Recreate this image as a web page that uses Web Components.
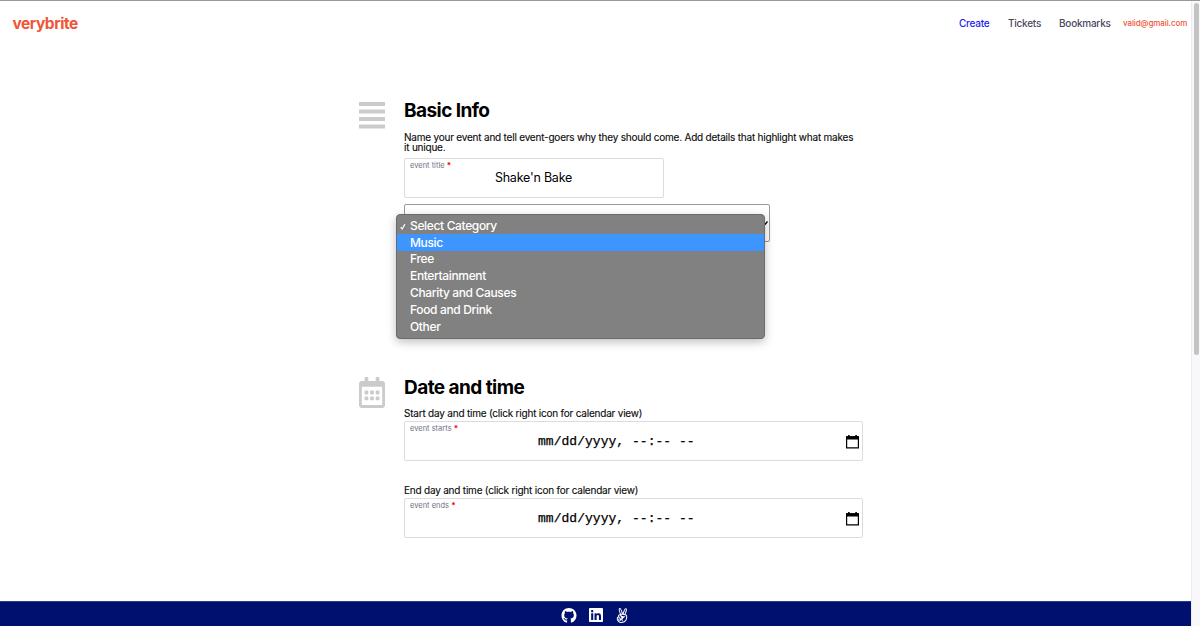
<!DOCTYPE html>
<html lang="en">
<head>
<meta charset="utf-8">
<title>verybrite</title>
<style>
html,body{margin:0;height:100%;overflow:hidden;background:#fff;font-family:Inter,"Liberation Sans",sans-serif}
</style>
</head>
<body>
<vb-app></vb-app>
<script>
const define = (name, html) => {
  const t = document.createElement('template');
  t.innerHTML = html;
  customElements.define(name, class extends HTMLElement {
    constructor() {
      super();
      this.attachShadow({ mode: 'open' }).append(t.content.cloneNode(true));
    }
  });
};

define('vb-header', `<style>
:host{display:flex;justify-content:space-between;height:45px;padding:0 4px 0 12.500px;align-items:center;box-sizing:border-box}
.logo{color:#f05537;font-weight:700;font-size:15.5px;letter-spacing:-.45px;line-height:20px;padding-top:1px}
nav{display:flex;align-items:center;font-size:10px;line-height:14px;font-weight:500;color:#4b4860;white-space:nowrap;letter-spacing:-.24px;padding-bottom:1px}
.create{color:#1c1cf0;width:49px}.tickets{width:51px}.book{width:64px}
.mail{color:#f05537;font-size:8px;width:64px;letter-spacing:-.09px}
</style><div class="logo">verybrite</div>
<nav><span class="create">Create</span><span class="tickets">Tickets</span><span class="book">Bookmarks</span><span class="mail">valid@gmail.com</span></nav>`);

define('vb-section', `<style>
:host{display:flex;gap:19px;box-sizing:border-box}
.icon{width:26px;flex:none;padding-top:3px}
.body{width:459px}
h2{margin:0;font-size:19px;line-height:24px;font-weight:700;letter-spacing:-.56px;color:#000;white-space:nowrap}
</style><div class="icon"><slot name="icon"></slot></div>
<div class="body"><h2><slot name="title"></slot></h2><slot></slot></div>`);

define('vb-note', `<style>
:host{display:block;font-size:10px;line-height:10px;color:#0a0a0a;white-space:nowrap;letter-spacing:-.21px;-webkit-text-stroke:.12px #0a0a0a}
</style><slot></slot>`);

define('vb-field', `<style>
:host{display:block;box-sizing:border-box;height:40px;border:1px solid #dcdce0;border-radius:2px;padding:2px 6px 2px 5px;background:#fff}
label{display:block;font-size:7.5px;line-height:9px;color:#6f7287;white-space:nowrap}
b{color:#f00;font-size:8px}
.value{display:flex;justify-content:center;align-items:center;height:15px;font-size:12.5px;letter-spacing:-.22px;color:#000;white-space:nowrap}
</style><label><slot name="label"></slot> <b>*</b></label><div class="value"><slot></slot></div>`);

define('vb-datetime', `<style>
:host{display:grid;grid-template-columns:1fr 14px;align-items:center;width:100%;font:13px/16px "Liberation Mono",monospace;letter-spacing:.03px;white-space:pre;-webkit-text-stroke:.25px #000;padding-top:3px}
span{padding-left:128px}
svg{display:block;width:13px;height:14px;margin:-1px 0 0 4px}
</style><span>mm/dd/yyyy, --:-- --</span>
<svg viewBox="0 0 13 14"><path d="M.6 1.9h11.8v11H.6z" fill="none" stroke="#000" stroke-width="1.2"/><path d="M0 1.3h13v3.2H0zM2.1 0h1.6v2H2.1zM9.3 0h1.6v2H9.3z"/></svg>`);

define('vb-menu-item', `<style>
:host{display:flex;align-items:center;height:16.85px;padding-left:4px;color:#fff;font-size:12px;letter-spacing:-.35px;font-weight:500;white-space:nowrap;box-sizing:border-box;padding-bottom:1.500px}
:host([active]){background:#3d95ff}
i{width:9px;flex:none}
svg{display:none;width:6px;height:7px;margin:2px 0 0 -1px}
:host([checked]) svg{display:block}
</style><i><svg viewBox="0 0 7 8"><path d="M.8 4.800 2.500 7 5.800 1.200" fill="none" stroke="#fff" stroke-width="1.3"/></svg></i><slot></slot>`);

define('vb-select', `<style>
:host{display:block;position:relative;box-sizing:border-box;width:366px;height:38px;border:1px solid #999;border-radius:2px;background:#fff}
.arrow{position:absolute;right:1px;top:16px;width:7px;height:5px}
.menu{position:absolute;left:-9px;top:9px;width:369px;height:125px;box-sizing:border-box;padding:2.500px 0;border:1px solid #6b6b6b;border-radius:4px;background:#818181;box-shadow:0 3px 10px rgba(0,0,0,.26)}
</style><svg class="arrow" viewBox="0 0 7 5"><path d="M.5.5 3.500 4 6.500.5" fill="none" stroke="#000" stroke-width="1.3"/></svg>
<div class="menu"><slot></slot></div>`);

define('vb-footer', `<style>
:host{display:flex;justify-content:center;align-items:center;height:25px;background:#00106e;padding-top:2px;box-sizing:border-box;border-top:1px solid #30398a}
svg{display:block;height:15px;fill:#fff}
.gh{width:16px;margin-right:12px;margin-left:-1px}.li{width:14px;height:16px;margin-right:12px}.al{width:14px;margin-right:1px}
</style>
<svg class="gh" viewBox="0 0 496 496"><path d="M165.9 389.400c0 2-2.300 3.600-5.200 3.600-3.300.3-5.600-1.300-5.600-3.600 0-2 2.300-3.600 5.200-3.600 3-.3 5.600 1.300 5.600 3.600zM244.800 0C106.100 0 0 105.300 0 244c0 110.900 69.800 205.800 169.500 239.200 12.800 2.300 17.300-5.600 17.300-12.100 0-6.200-.3-40.400-.3-61.400 0 0-70 15-84.700-29.800 0 0-11.400-29.100-27.800-36.600 0 0-22.900-15.700 1.600-15.400 0 0 24.900 2 38.600 25.800 21.900 38.600 58.600 27.500 72.900 20.900 2.300-16 8.800-27.100 16-33.700-55.900-6.200-112.300-14.300-112.300-110.500 0-27.500 7.600-41.300 23.600-58.900-2.600-6.500-11.100-33.300 2.600-67.900 20.900-6.500 69 27 69 27 20-5.600 41.500-8.500 62.800-8.500s42.800 2.900 62.800 8.500c0 0 48.100-33.600 69-27 13.700 34.700 5.200 61.400 2.600 67.900 16 17.700 25.800 31.500 25.800 58.900 0 96.500-58.900 104.200-114.800 110.500 9.200 7.900 17 22.900 17 46.400 0 33.700-.3 75.400-.3 83.600 0 6.500 4.600 14.400 17.300 12.100C428.200 449.800 496 354.900 496 244 496 105.300 383.500 0 244.800 0z"/></svg>
<svg class="li" viewBox="0 32 448 448"><path d="M416 32H31.900C14.300 32 0 46.500 0 64.300v383.400C0 465.500 14.300 480 31.900 480H416c17.600 0 32-14.500 32-32.300V64.300c0-17.800-14.400-32.300-32-32.300zM135.400 416H69V202.200h66.500V416zm-33.200-243c-21.300 0-38.500-17.300-38.500-38.500S80.900 96 102.200 96c21.200 0 38.500 17.300 38.500 38.500 0 21.300-17.200 38.500-38.500 38.500zm282.100 243h-66.400V312c0-24.800-.5-56.700-34.500-56.700-34.600 0-39.900 27-39.900 54.900V416h-66.400V202.200h63.700v29.200h.9c8.900-16.800 30.600-34.500 62.900-34.500 67.200 0 79.700 44.300 79.700 101.900V416z"/></svg>
<svg class="al" viewBox="0 0 448 512"><path d="M347.100 215.400c11.700-32.600 45.400-126.900 45.400-157.100 0-26.600-15.700-48.900-43.700-48.900-44.600 0-84.600 131.700-97.100 163.100C242 144 196.600 0 156.600 0c-31.100 0-45.700 22.900-45.700 51.700 0 35.300 34.200 126.800 46.600 162-6.300-2.300-13.100-4.300-20-4.300-23.400 0-48.300 29.100-48.300 52.600 0 8.900 4.900 21.400 8 29.700-36.900 10-51.100 34.600-51.100 71.700C46 435.600 114.400 512 210.600 512c118 0 191.400-88.600 191.400-202.900 0-43.100-6.900-82-54.900-93.700zM311.700 108c4-12.300 21.100-64.300 37.100-64.300 8.600 0 10.900 8.900 10.900 16 0 19.100-38.600 124.600-47.100 148l-34-6 33.100-93.700zM142.300 48.300c0-11.900 14.500-45.700 46.300 47.100l34.600 100.300c-15.600-1.300-27.700-3-35.400 1.400-10.900-28.800-45.500-119.700-45.500-148.800zM140 244c29.300 0 67.100 94.600 67.100 107.400 0 5.100-4.900 11.400-10.600 11.400-20.900 0-76.900-76.900-76.900-97.700.1-7.700 12.700-21.100 20.400-21.100zm184.300 186.300c-29.100 32-66.300 48.600-109.700 48.600-59.400 0-106.300-32.600-128.900-88.300-17.100-43.400 3.800-68.300 20.600-68.300 11.400 0 54.300 60.300 54.300 73.100 0 4.900-7.700 8.300-11.700 8.300-16.100 0-22.400-15.500-51.100-51.400-29.700 29.700 20.500 86.900 58.300 86.900 26.100 0 43.100-24.200 38-42 3.700 0 8.300.3 11.700-.6 1.100 27.100 9.100 59.400 41.700 61.700 0-.9 2-7.100 2-7.400 0-17.400-10.600-32.600-10.600-50.300 0-28.300 21.700-55.700 43.700-71.700 8-6 17.700-9.700 27.100-13.100 9.700-3.700 20-8 27.400-15.400-1.100-11.200-5.700-21.100-16.900-21.100-27.700 0-120.600 4-120.600-39.700 0-6.700.1-13.100 17.400-13.100 32.300 0 114.300 8 138.300 29.100 18.100 16.100 24.300 113.200-31 174.700z"/></svg>`);

define('vb-scrollbar', `<style>
:host{display:block;width:9px;background:#f8f8fa;border-left:1px solid #ececee;box-sizing:border-box}
div{width:5px;height:352px;margin:2px auto 0 2px;border-radius:3px;background:#c3c3c3}
</style><div></div>`);

define('vb-app', `<style>
:host{display:grid;grid-template-columns:1191px 9px;height:626px;box-sizing:border-box;border-top:1px solid #999}
.page{display:flex;flex-direction:column;height:625px}
main{flex:1;padding:53px 0 0 359px}
.first{height:277px}
.icon{display:block;fill:#cbcbcb}
.cal{margin-top:-2px}
.t1{width:260px;margin-top:6px}
vb-select{margin-top:6px}
.n1{margin-top:9px}.n2{margin-top:8px}.n3{margin-top:24px}
.d{margin-top:3px}
</style>
<div class="page"><vb-header></vb-header>
<main>
<vb-section class="first">
<svg slot="icon" class="icon" width="26" height="28" viewBox="0 0 26 28"><path d="M0 0h26v4H0zM0 7.500h26v4H0zM0 15h26v4H0zM0 22.500h26v4H0z"/></svg>
<span slot="title">Basic Info</span>
<vb-note class="n1">Name your event and tell event-goers why they should come. Add details that highlight what makes<br>it unique.</vb-note>
<vb-field class="t1"><span slot="label">event title</span>Shake'n Bake</vb-field>
<vb-select>
<vb-menu-item checked>Select Category</vb-menu-item>
<vb-menu-item active>Music</vb-menu-item>
<vb-menu-item>Free</vb-menu-item>
<vb-menu-item>Entertainment</vb-menu-item>
<vb-menu-item>Charity and Causes</vb-menu-item>
<vb-menu-item>Food and Drink</vb-menu-item>
<vb-menu-item>Other</vb-menu-item>
</vb-select>
</vb-section>
<vb-section>
<svg slot="icon" class="icon cal" width="26" height="31" viewBox="0 0 448 512" preserveAspectRatio="none"><path d="M148 288h-40c-6.600 0-12-5.400-12-12v-40c0-6.600 5.400-12 12-12h40c6.600 0 12 5.400 12 12v40c0 6.600-5.400 12-12 12zm108-12v-40c0-6.600-5.400-12-12-12h-40c-6.600 0-12 5.400-12 12v40c0 6.600 5.400 12 12 12h40c6.600 0 12-5.400 12-12zm96 0v-40c0-6.600-5.400-12-12-12h-40c-6.600 0-12 5.400-12 12v40c0 6.600 5.400 12 12 12h40c6.600 0 12-5.400 12-12zm-96 96v-40c0-6.600-5.400-12-12-12h-40c-6.600 0-12 5.400-12 12v40c0 6.600 5.400 12 12 12h40c6.600 0 12-5.400 12-12zm-96 0v-40c0-6.600-5.400-12-12-12h-40c-6.600 0-12 5.400-12 12v40c0 6.600 5.400 12 12 12h40c6.600 0 12-5.400 12-12zm192 0v-40c0-6.600-5.400-12-12-12h-40c-6.600 0-12 5.400-12 12v40c0 6.600 5.400 12 12 12h40c6.600 0 12-5.400 12-12zm96-260v352c0 26.500-21.500 48-48 48H48c-26.500 0-48-21.500-48-48V112c0-26.500 21.500-48 48-48h48V12c0-6.600 5.400-12 12-12h40c6.600 0 12 5.400 12 12v52h128V12c0-6.600 5.400-12 12-12h40c6.600 0 12 5.400 12 12v52h48c26.500 0 48 21.500 48 48zm-48 346V160H48v298c0 3.300 2.700 6 6 6h340c3.300 0 6-2.700 6-6z"/></svg>
<span slot="title">Date and time</span>
<vb-note class="n2">Start day and time (click right icon for calendar view)</vb-note>
<vb-field class="d"><span slot="label">event starts</span><vb-datetime></vb-datetime></vb-field>
<vb-note class="n3">End day and time (click right icon for calendar view)</vb-note>
<vb-field class="d"><span slot="label">event ends</span><vb-datetime></vb-datetime></vb-field>
</vb-section>
</main>
<vb-footer></vb-footer></div>
<vb-scrollbar></vb-scrollbar>`);
</script>
</body>
</html>
